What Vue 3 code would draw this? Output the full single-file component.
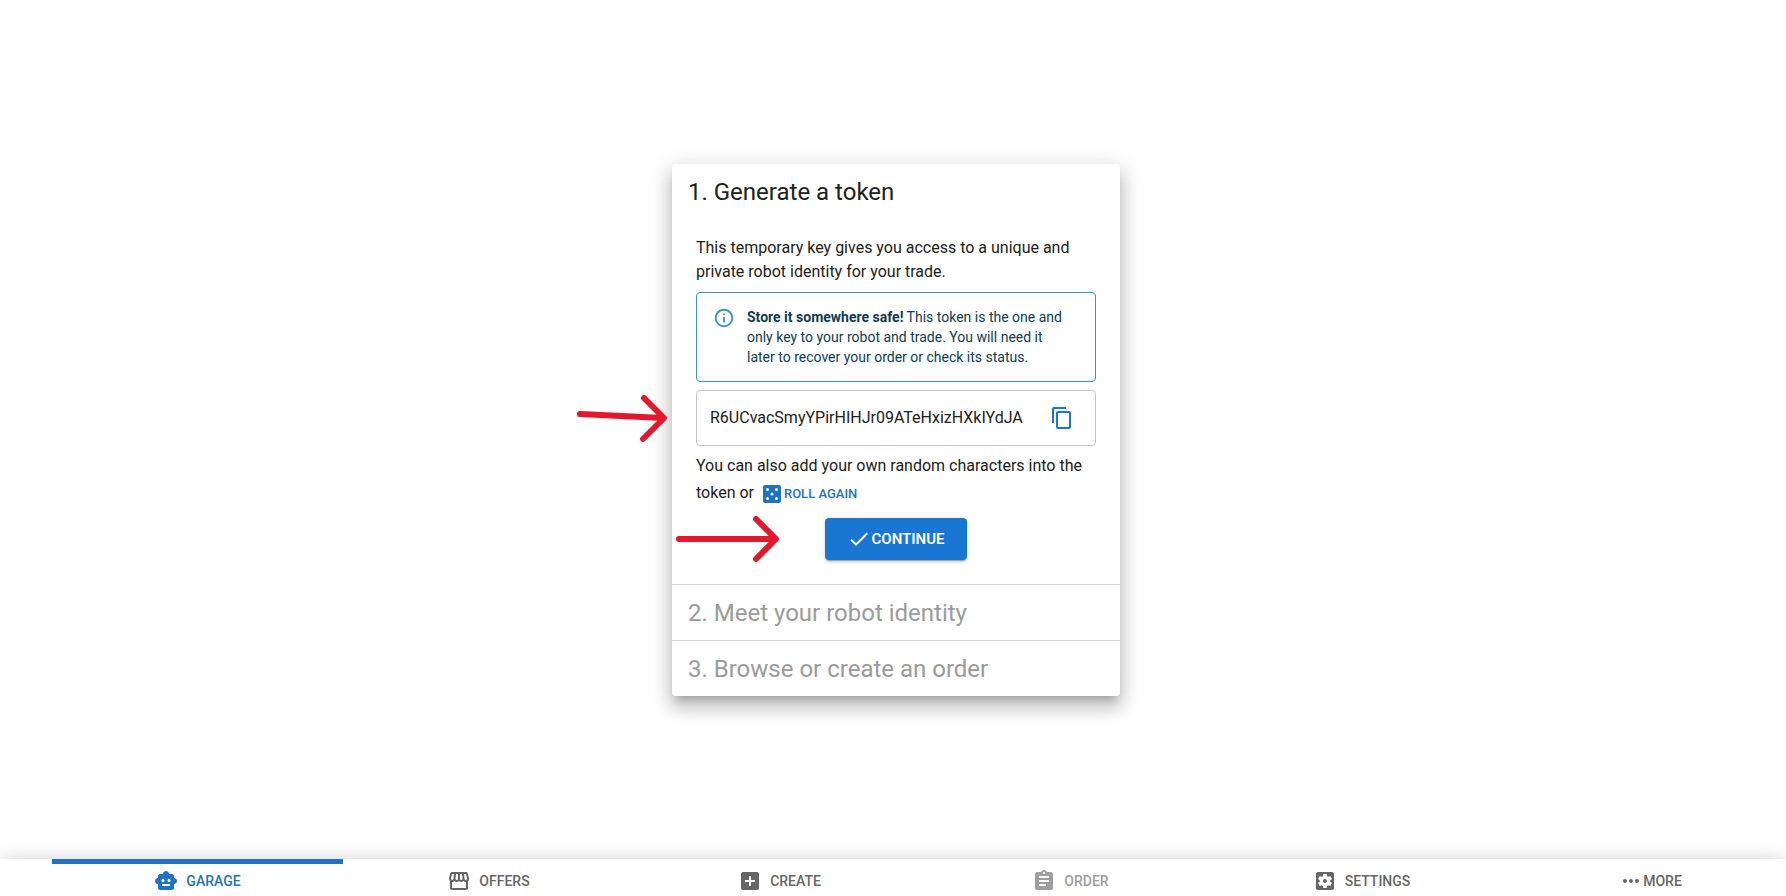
<script setup>
import { ref } from 'vue'

const token = ref('R6UCvacSmyYPirHIHJr09ATeHxizHXkIYdJA')
const active = ref('GARAGE')

const tabs = [
  {
    label: 'GARAGE',
    path: 'M20 9V7c0-1.1-.9-2-2-2h-3c0-1.66-1.34-3-3-3S9 3.34 9 5H6c-1.1 0-2 .9-2 2v2c-1.66 0-3 1.34-3 3s1.34 3 3 3v4c0 1.1.9 2 2 2h12c1.1 0 2-.9 2-2v-4c1.66 0 3-1.34 3-3s-1.34-3-3-3zM7.5 11.5c0-.83.67-1.5 1.5-1.5s1.5.67 1.5 1.5S9.83 13 9 13s-1.5-.67-1.5-1.5zM16 17H8v-2h8v2zm-1-4c-.83 0-1.5-.67-1.5-1.5S14.17 10 15 10s1.5.67 1.5 1.5S15.83 13 15 13z',
  },
  {
    label: 'OFFERS',
    path: 'M21.9 8.89l-1.05-4.37c-.22-.9-1-1.52-1.91-1.52H5.05c-.9 0-1.69.63-1.9 1.52L2.1 8.89c-.24 1.02-.02 2.06.62 2.88.08.11.19.19.28.29V19c0 1.1.9 2 2 2h14c1.1 0 2-.9 2-2v-6.94c.09-.09.2-.18.28-.28.64-.82.87-1.87.62-2.89zm-2.99-3.9l1.05 4.37c.1.42.01.84-.25 1.17-.14.18-.44.47-.94.47-.61 0-1.14-.49-1.21-1.14L16.98 5l1.93-.01zM13 5h1.96l.54 4.52c.05.39-.07.78-.33 1.07-.22.26-.54.41-.95.41-.67 0-1.22-.59-1.22-1.31V5zM8.49 9.52L9.04 5H11v4.69c0 .72-.55 1.31-1.29 1.31-.34 0-.65-.15-.89-.41-.25-.29-.37-.68-.33-1.07zm-4.45-.16L5.05 5h1.97l-.58 4.86c-.08.65-.6 1.14-1.21 1.14-.49 0-.8-.29-.93-.47-.27-.32-.36-.75-.26-1.17zM5 19v-6.03c.08.01.15.03.23.03.87 0 1.66-.36 2.24-.95.6.6 1.4.95 2.31.95.87 0 1.65-.36 2.23-.93.59.57 1.39.93 2.29.93.84 0 1.64-.35 2.24-.95.58.59 1.37.95 2.24.95.08 0 .15-.02.23-.03V19H5z',
  },
  {
    label: 'CREATE',
    path: 'M19 3H5c-1.11 0-2 .9-2 2v14c0 1.1.89 2 2 2h14c1.1 0 2-.9 2-2V5c0-1.1-.9-2-2-2zm-2 10h-4v4h-2v-4H7v-2h4V7h2v4h4v2z',
  },
  {
    label: 'ORDER',
    disabled: true,
    path: 'M19 3h-4.18C14.4 1.84 13.3 1 12 1c-1.3 0-2.4.84-2.82 2H5c-1.1 0-2 .9-2 2v14c0 1.1.9 2 2 2h14c1.1 0 2-.9 2-2V5c0-1.1-.9-2-2-2zm-7 0c.55 0 1 .45 1 1s-.45 1-1 1-1-.45-1-1 .45-1 1-1zm2 14H7v-2h7v2zm3-4H7v-2h10v2zm0-4H7V7h10v2z',
  },
  {
    label: 'SETTINGS',
    path: 'M12 10c-1.1 0-2 .9-2 2s.9 2 2 2 2-.9 2-2-.9-2-2-2zm7-7H5c-1.11 0-2 .9-2 2v14c0 1.1.89 2 2 2h14c1.11 0 2-.9 2-2V5c0-1.1-.89-2-2-2zm-1.75 9c0 .23-.02.46-.05.68l1.48 1.16c.13.11.17.3.08.45l-1.4 2.42c-.09.15-.27.21-.43.15l-1.74-.7c-.36.28-.76.51-1.18.69l-.26 1.85c-.03.17-.18.3-.35.3h-2.8c-.17 0-.32-.13-.35-.29l-.26-1.85c-.43-.18-.82-.41-1.18-.69l-1.74.7c-.16.06-.34 0-.43-.15l-1.4-2.42c-.09-.15-.05-.34.08-.45l1.48-1.16c-.03-.23-.05-.46-.05-.69 0-.23.02-.46.05-.68l-1.48-1.16c-.13-.11-.17-.3-.08-.45l1.4-2.42c.09-.15.27-.21.43-.15l1.74.7c.36-.28.76-.51 1.18-.69l.26-1.85c.03-.17.18-.3.35-.3h2.8c.17 0 .32.13.35.29l.26 1.85c.43.18.82.41 1.18.69l1.74-.7c.16-.06.34 0 .43.15l1.4 2.42c.09.15.05.34-.08.45l-1.48 1.16c.03.23.05.46.05.69z',
  },
  {
    label: 'MORE',
    tight: true,
    path: 'M6 10c-1.1 0-2 .9-2 2s.9 2 2 2 2-.9 2-2-.9-2-2-2zm12 0c-1.1 0-2 .9-2 2s.9 2 2 2 2-.9 2-2-.9-2-2-2zm-6 0c-1.1 0-2 .9-2 2s.9 2 2 2 2-.9 2-2-.9-2-2-2z',
  },
]
</script>

<template>
  <div class="page">
    <main class="main">
      <section class="card">
        <h2 class="step">1. Generate a token</h2>
        <div class="body">
          <p class="text">This temporary key gives you access to a unique and private robot identity for your trade.</p>

          <div class="alert" role="note">
            <svg class="info" viewBox="0 0 24 24" aria-hidden="true">
              <path d="M11 7h2v2h-2zm0 4h2v6h-2zm1-9C6.48 2 2 6.48 2 12s4.48 10 10 10 10-4.48 10-10S17.52 2 12 2zm0 18c-4.41 0-8-3.59-8-8s3.59-8 8-8 8 3.59 8 8-3.59 8-8 8z" />
            </svg>
            <p class="alert-text">
              <strong>Store it somewhere safe!</strong> This token is the one and only key to your robot and trade.
              You will need it later to recover your order or check its status.
            </p>
          </div>

          <div class="token">
            <input v-model="token" class="token-input" type="text" aria-label="Token" spellcheck="false" />
            <button class="copy" type="button" aria-label="Copy token">
              <svg class="icon" viewBox="0 0 24 24" aria-hidden="true">
                <path d="M16 1H4c-1.1 0-2 .9-2 2v14h2V3h12V1zm3 4H8c-1.1 0-2 .9-2 2v14c0 1.1.9 2 2 2h11c1.1 0 2-.9 2-2V7c0-1.1-.9-2-2-2zm0 16H8V7h11v14z" />
              </svg>
            </button>
          </div>

          <p class="text hint">
            You can also add your own random characters into the token or
            <button class="roll" type="button">
              <svg class="icon" viewBox="0 0 24 24" aria-hidden="true">
                <path
                  fill-rule="evenodd"
                  d="M19 3H5c-1.1 0-2 .9-2 2v14c0 1.1.9 2 2 2h14c1.1 0 2-.9 2-2V5c0-1.1-.9-2-2-2zM6 7.5a1.5 1.5 0 1 0 3 0a1.5 1.5 0 1 0-3 0zM15 7.500a1.500 1.500 0 1 0 3 0a1.500 1.500 0 1 0-3 0zM10.500 12a1.500 1.500 0 1 0 3 0a1.500 1.500 0 1 0-3 0zM6 16.500a1.500 1.500 0 1 0 3 0a1.500 1.500 0 1 0-3 0zM15 16.500a1.500 1.500 0 1 0 3 0a1.500 1.500 0 1 0-3 0z"
                />
              </svg>
              <span>ROLL AGAIN</span>
            </button>
          </p>

          <button class="continue" type="button">
            <svg class="icon" viewBox="0 0 24 24" aria-hidden="true">
              <path d="M9 16.170 4.830 12l-1.420 1.410L9 19 21 7l-1.410-1.410z" />
            </svg>
            <span>CONTINUE</span>
          </button>
        </div>
        <h2 class="step later">2. Meet your robot identity</h2>
        <h2 class="step later">3. Browse or create an order</h2>

        <svg class="arrow arrow-token" viewBox="0 0 100 50" aria-hidden="true">
          <path d="M8 20 L91 24 M72 4 L92 24 L71 45" />
        </svg>
        <svg class="arrow arrow-continue" viewBox="0 0 112 50" aria-hidden="true">
          <path d="M7 25 L103 25 M84 5 L104 25 L84 45" />
        </svg>
      </section>
    </main>

    <nav class="nav">
      <button
        v-for="tab in tabs"
        :key="tab.label"
        type="button"
        class="tab"
        :class="{ active: tab.label === active, tight: tab.tight }"
        :disabled="tab.disabled"
        @click="active = tab.label"
      >
        <svg class="icon" viewBox="0 0 24 24" aria-hidden="true"><path :d="tab.path" /></svg>
        <span>{{ tab.label }}</span>
      </button>
    </nav>
  </div>
</template>

<style>
body {
  margin: 0;
  background: #fff;
}
</style>

<style scoped>
* {
  box-sizing: border-box;
}
.page {
  min-height: 100vh;
  display: flex;
  flex-direction: column;
  overflow: hidden;
  font-family: Roboto, "Liberation Sans", sans-serif;
  color: #212121;
}
.main {
  flex: 1;
  display: flex;
  align-items: center;
  justify-content: center;
  padding-left: 6px;
}
.card {
  position: relative;
  width: 448px;
  max-width: 100%;
  background: #fff;
  border-radius: 4px;
  box-shadow: 0 7px 8px -4px rgba(0, 0, 0, 0.2), 0 12px 17px 2px rgba(0, 0, 0, 0.14),
    0 5px 22px 4px rgba(0, 0, 0, 0.12);
}
.step {
  margin: 0;
  padding: 12px 16px;
  font-size: 24px;
  line-height: 32px;
  font-weight: 400;
}
.later {
  padding-bottom: 11px;
  color: #9b9b9b;
  border-top: 1px solid #d6d6d6;
}
.body {
  display: flex;
  flex-direction: column;
  padding: 16px 24px 24px;
}
.text {
  margin: 0;
  font-size: 16px;
  line-height: 24px;
}
.alert {
  display: flex;
  gap: 12px;
  margin-top: 8px;
  padding: 14px 24px 14px 16px;
  border: 1px solid #3d94bf;
  border-radius: 4px;
  color: #0e3c53;
}
.info {
  flex: none;
  width: 22px;
  height: 22px;
  fill: #3d94bf;
}
.alert-text {
  margin: 0;
  font-size: 14px;
  line-height: 20px;
}
.token {
  display: flex;
  align-items: center;
  height: 56px;
  margin-top: 8px;
  padding: 0 13px;
  border: 1px solid #c4c4c4;
  border-radius: 4px;
}
.token-input {
  flex: 1;
  min-width: 0;
  padding: 0;
  border: 0;
  outline: 0;
  background: none;
  font: inherit;
  font-size: 16px;
  color: inherit;
}
button {
  border: 0;
  background: none;
  font: inherit;
  cursor: pointer;
}
.icon {
  flex: none;
  display: block;
  width: 24px;
  height: 24px;
  fill: currentColor;
}
.copy {
  padding: 8px;
  color: #1976d2;
}
.hint {
  margin-top: 8px;
}
.roll {
  display: inline-flex;
  align-items: center;
  padding: 4px 2px;
  vertical-align: middle;
  font-size: 13px;
  font-weight: 500;
  color: #1f72c4;
}
.continue {
  align-self: center;
  display: flex;
  align-items: center;
  margin-top: 8px;
  padding: 9px 22px;
  border-radius: 4px;
  background: #1976d2;
  color: #fff;
  font-size: 15px;
  font-weight: 600;
  box-shadow: 0 3px 1px -2px rgba(0, 0, 0, 0.2), 0 2px 2px rgba(0, 0, 0, 0.14), 0 1px 5px rgba(0, 0, 0, 0.12);
}
.arrow {
  position: absolute;
  fill: none;
  stroke: #e3182d;
  stroke-width: 6;
  stroke-linecap: round;
  stroke-linejoin: round;
  pointer-events: none;
}
.arrow-token {
  left: -100px;
  top: 230px;
  width: 100px;
  height: 50px;
}
.arrow-continue {
  left: 0;
  top: 350px;
  width: 112px;
  height: 50px;
}
.nav {
  display: grid;
  grid-template-columns: repeat(5, 291fr) 279fr;
  height: 37px;
  padding-left: 52px;
  background: #fff;
  box-shadow: 0 0 18px rgba(0, 0, 0, 0.18);
}
.tab {
  display: flex;
  align-items: center;
  justify-content: center;
  gap: 8px;
  padding: 2px 0 0;
  border-top: 5px solid transparent;
  font-size: 14px;
  font-weight: 500;
  color: #666;
}
.tab.active {
  border-top-color: #1f72c4;
  color: #1f72c4;
}
.tab:disabled {
  color: #9e9e9e;
  cursor: default;
}
.tab.tight {
  gap: 0;
  padding-left: 8px;
}
</style>
